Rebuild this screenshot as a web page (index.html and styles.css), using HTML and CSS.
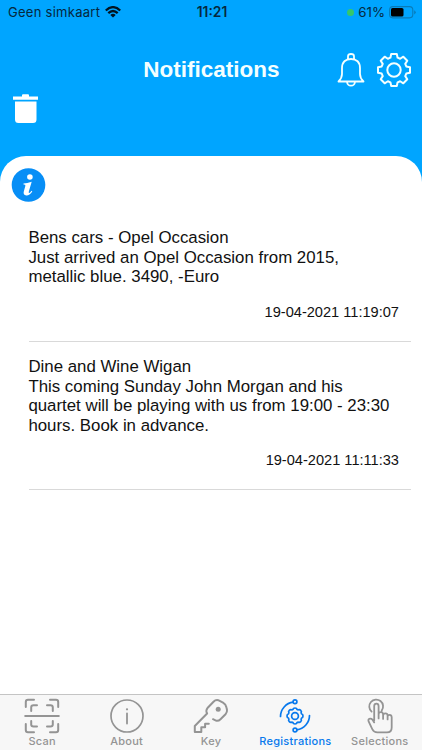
FILE: index.html
```
<!DOCTYPE html>
<html lang="en">
<head>
<meta charset="utf-8">
<meta name="viewport" content="width=device-width, initial-scale=1">
<title>Notifications</title>
<link rel="stylesheet" href="styles.css">
</head>
<body>
<div class="app">
  <header class="top">
    <div class="status">
      <div class="carrier"><span>Geen simkaart</span>
        <svg width="16" height="12" viewBox="0 0 16 12" fill="none" stroke="currentColor" stroke-width="2.3"><path d="M.8 4.5Q8-2.2 15.2 4.5M3.3 7.2Q8 2.9 12.7 7.2"/><path d="M8 11.6L5.3 8.9Q8 6.7 10.7 8.9Z" fill="currentColor" stroke="none"/></svg>
      </div>
      <div class="clock">11:21</div>
      <div class="power"><i class="dot"></i><span>61%</span>
        <svg width="27" height="13" viewBox="0 0 27 13"><rect x=".6" y=".6" width="23.2" height="11.3" rx="3.3" fill="none" stroke="#087bb8" stroke-width="1.1"/><rect x="2" y="2" width="12.5" height="8.5" rx="1.6"/><path d="M25.2 4.2Q26.7 5 26.7 6.2T25.2 8.4Z" fill="#087bb8"/></svg>
      </div>
    </div>
    <div class="nav">
      <h1>Notifications</h1>
      <div class="actions">
        <svg width="28" height="36" viewBox="0 0 28 36" fill="none" stroke="currentColor" stroke-width="1.8" stroke-linejoin="round" stroke-linecap="round"><path d="M11 7.2V4.3Q11 2 14 2T17 4.3V7.2M1.5 29.5H26.5Q23 26 23 22V16C23 10 19.5 7 14 7S5 10 5 16V22Q5 26 1.5 29.5ZM10 30Q10.5 33.7 14 33.7T18 30"/></svg>
        <svg width="36" height="36" viewBox="-18 -18 36 36" fill="none" stroke="currentColor" stroke-width="2" stroke-linejoin="round"><path d="M-3.6-12.3L-2.8-16H2.8L3.6-12.3L6.15-11.24L9.33-13.29L13.29-9.33L11.24-6.15L12.3-3.6L16-2.8V2.8L12.3 3.6L11.24 6.15L13.29 9.33L9.33 13.29L6.15 11.24L3.6 12.3L2.8 16H-2.8L-3.6 12.3L-6.15 11.24L-9.33 13.29L-13.29 9.33L-11.24 6.15L-12.3 3.6L-16 2.8V-2.8L-12.3-3.6L-11.24-6.15L-13.29-9.33L-9.33-13.29L-6.15-11.24Z"/><circle r="6.7"/></svg>
      </div>
    </div>
    <svg class="trash" width="26" height="30" viewBox="0 0 26 30" fill="currentColor"><path d="M0 2.4H9V1.2Q9 .3 10 .3H15Q16 .3 16 1.2V2.4H25V5.8H0ZM2 7.5H23.5V25.5Q23.5 29 20 29H5.5Q2 29 2 25.5Z"/></svg>
  </header>
  <main class="sheet">
    <svg class="info" width="35" height="34" viewBox="-.5 0 35 34"><circle cx="17" cy="17" r="16.8" fill="#078ef6"/><circle cx="18.4" cy="9" r="2.8" fill="#fff"/><path d="M12 15.4Q15.5 15.3 20.2 13.8L17.4 23.3Q16.9 25.4 17.8 25Q18.8 24.6 20 22.8L20.8 23.4Q18 27.6 14.8 27.4Q11.4 27.1 12.3 23.6L13.9 17.8Q14.3 16.4 12 16.4Z" fill="#fff"/></svg>
    <article class="item">
      <p>Bens cars - Opel Occasion<br>Just arrived an Opel Occasion from 2015,<br>metallic blue. 3490, -Euro</p>
      <time>19-04-2021 11:19:07</time>
    </article>
    <article class="item">
      <p>Dine and Wine Wigan<br>This coming Sunday John Morgan and his<br>quartet will be playing with us from 19:00 - 23:30<br>hours. Book in advance.</p>
      <time>19-04-2021 11:11:33</time>
    </article>
  </main>
  <nav class="tabs">
    <a class="tab"><svg width="36" height="36" viewBox="0 0 36 36"><path d="M1.8 9V4Q1.8 1.8 4 1.8H10M26 1.8H32Q34.2 1.8 34.2 4V9M1.8 26V32Q1.8 34.2 4 34.2H10M26 34.2H32Q34.2 34.2 34.2 32V26M7.2 13V9.5Q7.2 7.2 9.5 7.2H13M23 7.2H26.5Q28.8 7.2 28.8 9.5V13M7.2 23V26.5Q7.2 28.4 9.5 28.4H13M23 28.4H26.5Q28.8 28.4 28.8 26.5V23M1.2 18H34.8"/></svg><span>Scan</span></a>
    <a class="tab"><svg width="36" height="36" viewBox="0 0 36 36"><circle cx="18" cy="18" r="16" stroke-width="1.7"/><path d="M18 15.5V25.5" stroke-width="1.8"/><circle cx="18" cy="11.3" r="1.1" fill="currentColor" stroke="none"/></svg><span>About</span></a>
    <a class="tab"><svg width="36" height="36" viewBox="0 0 36 36"><path d="M14.1 15.5L1.8 28V34H8.3V29.3H12.1V25.7H15.8M14.1 15.5Q12.5 12.5 14.5 10L20.5 3.7Q22.5 1.7 25.2 2.2L30 4.6Q33 6.3 33.5 9.5L34 12Q34.3 14.3 32.5 16.2L27.5 21.2Q25.5 23.2 23 22.6L20 21.2"/><circle cx="25.2" cy="11.3" r="2.5" fill="currentColor" stroke="none"/></svg><span>Key</span></a>
    <a class="tab active"><svg width="36" height="36" viewBox="-18 -18 36 36" stroke-width="1.7"><path d="M-14.5.5A14.5 14.5 0 0 1-1.8-13.8M14.5-.5A14.5 14.5 0 0 1 1.8 13.8"/><circle cy="-14.3" r="1.9"/><circle cy="14" r="1.9"/><path d="M-2-6.6Q-1.8-8 0-8T2-6.6L3.3-6.1Q4.5-6.9 5.7-5.7T6.1-3.3L6.6-2Q8-1.8 8 0T6.6 2L6.1 3.3Q6.9 4.5 5.7 5.7T3.3 6.1L2 6.6Q1.8 8 0 8T-2 6.6L-3.3 6.1Q-4.5 6.9-5.7 5.7T-6.1 3.3L-6.6 2Q-8 1.8-8 0T-6.6-2L-6.1-3.3Q-6.9-4.5-5.7-5.7T-3.3-6.1Z"/><circle r="3.4"/></svg><span>Registrations</span></a>
    <a class="tab"><svg width="36" height="36" viewBox="1.6 -.4 36 36" stroke-width="1.8"><path d="M13.8 22V7.8Q13.8 5.3 16 5.3T18.2 7.8V20M18.2 16Q18.2 13.8 20.4 13.8T22.7 16V20.5M22.7 17Q22.9 15 25 15T27.2 17V21M27.2 18Q27.5 16.4 29.3 16.4T31.3 18.8V29Q31.3 34 26.5 34H17Q13.5 34 12 31L8.2 23Q7.4 20.5 9.6 20.2Q11 20 12 21.2L13.8 24M11.2 13.2A6.9 6.9 0 1 1 21.3 12.2"/></svg><span>Selections</span></a>
  </nav>
</div>
</body>
</html>
```
FILE: styles.css
```
* { box-sizing: border-box; }
body { margin: 0; font-family: "Liberation Sans", Arial, sans-serif; color: #111; background: #00a5ff; }
svg { display: block; flex: none; }
.app { height: 750px; display: flex; flex-direction: column; overflow: hidden; }
.top { height: 156px; flex: none; color: #f4ffff; }
.status { height: 24px; display: grid; grid-template-columns: 1fr auto 1fr; align-items: center; padding: 0 6px 0 8px; font: 13px/24px Inter, sans-serif; color: #06283d; }
.carrier { display: flex; align-items: center; gap: 5px; letter-spacing: .27px; }
.carrier svg { color: #001522; }
.clock { font-weight: 600; font-size: 13.8px; }
.power { display: flex; align-items: center; justify-content: flex-end; gap: 4px; font-size: 13.3px; }
.dot { width: 7px; height: 7px; border-radius: 50%; background: #35c76b; }
.nav { height: 70px; display: grid; grid-template-columns: 1fr auto 1fr; align-items: center; padding: 0 10px 0 11px; margin-top: 11px; }
.nav h1 { grid-column: 2; margin: 0; font-size: 22.5px; line-height: 28px; }
.actions { display: flex; justify-content: flex-end; align-items: center; gap: 11px; }
.trash { margin: -11px 0 0 13px; color: #fff; }
.sheet { flex: 1; background: #fff; border-radius: 26px 26px 0 0; padding: 12px 11px 0; }
.info { margin-bottom: 26px; }
.item { margin-left: 18px; height: 114px; border-bottom: 1px solid #d9d9d9; padding-right: 12px; }
.item + .item { height: 148px; padding-top: 15px; }
.item p { margin: 0 0 0 -.6px; font-size: 16.84px; line-height: 19.5px; white-space: nowrap; }
.item time { display: block; text-align: right; font-size: 14.6px; line-height: 18px; margin-top: 16.4px; }
.tabs { height: 56px; flex: none; display: grid; grid-template-columns: repeat(5, 1fr); background: #f7f7f7; border-top: 1px solid #c4c4c4; }
.tab { display: flex; flex-direction: column; align-items: center; color: #949494; padding-top: 3px; font: 500 11px/14px Inter, sans-serif; letter-spacing: .25px; }
.tab svg { fill: none; stroke: currentColor; stroke-linejoin: round; stroke-linecap: round; }
.tab svg:not([stroke-width]) { stroke-width: 2; }
.tab.active { color: #0879ed; }
```
